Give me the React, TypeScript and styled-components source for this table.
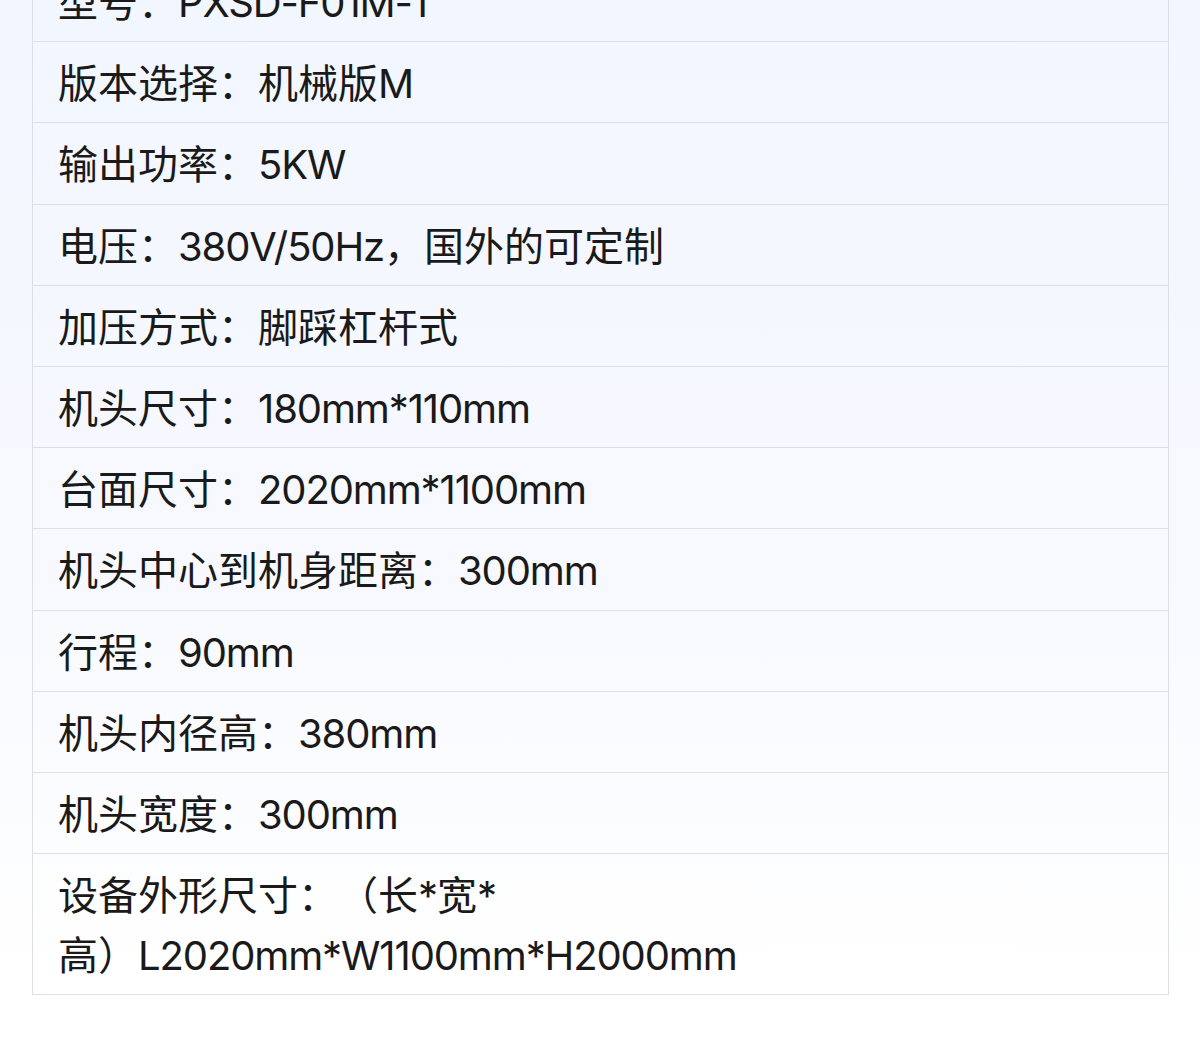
import styled, { createGlobalStyle } from "styled-components"

const GlobalStyle = createGlobalStyle`
  html, body {
    margin: 0;
    padding: 0;
  }
  body {
    min-height: 1059px;
    background: linear-gradient(180deg, #f2f6fe 0%, #f7f9fe 55%, #ffffff 92%);
    font-family: Inter, "Noto Sans CJK SC", sans-serif;
    color: #1a1a1a;
  }
`

const Page = styled.div`
  padding: 0 31px 64px 32px;
`

// the list is scrolled so the first row is cut by the top edge
const SpecTable = styled.div`
  margin-top: -39px;
  display: flex;
  flex-direction: column;
  border: 1px solid #dcdfe4;
  border-top: none;
`

const Row = styled.div`
  padding: 12.1px 25px 8.1px;
  font-size: 40px;
  line-height: 60px;
  text-spacing-trim: space-all;
  border-bottom: 1px solid #dcdfe4;
  &:last-child {
    border-bottom: none;
  }
`

// latin runs are a touch tighter than Inter's default
const Latin = styled.span`
  letter-spacing: -0.028em;
`

const NoWrap = styled.span`
  white-space: nowrap;
`

const specs: [string, string][] = [
  ["型号", "PXSD-F01M-1"],
  ["版本选择", "机械版M"],
  ["输出功率", "5KW"],
  ["电压", "380V/50Hz，国外的可定制"],
  ["加压方式", "脚踩杠杆式"],
  ["机头尺寸", "180mm*110mm"],
  ["台面尺寸", "2020mm*1100mm"],
  ["机头中心到机身距离", "300mm"],
  ["行程", "90mm"],
  ["机头内径高", "380mm"],
  ["机头宽度", "300mm"],
]

const Mixed = ({ text }: { text: string }) => (
  <>
    {text.split(/([\x20-\x7e]+)/).map((part, i) =>
      /^[\x20-\x7e]+$/.test(part) ? <Latin key={i}>{part}</Latin> : part
    )}
  </>
)

export default function App() {
  return (
    <>
      <GlobalStyle />
      <Page>
        <SpecTable>
          {specs.map(([label, value]) => (
            <Row key={label}>
              {label}：<Mixed text={value} />
            </Row>
          ))}
          <Row>
            设备外形尺寸：（长<Latin>*</Latin>宽<Latin>*</Latin>
            <NoWrap>
              高）<Mixed text="L2020mm*W1100mm*H2000mm" />
            </NoWrap>
          </Row>
        </SpecTable>
      </Page>
    </>
  )
}
